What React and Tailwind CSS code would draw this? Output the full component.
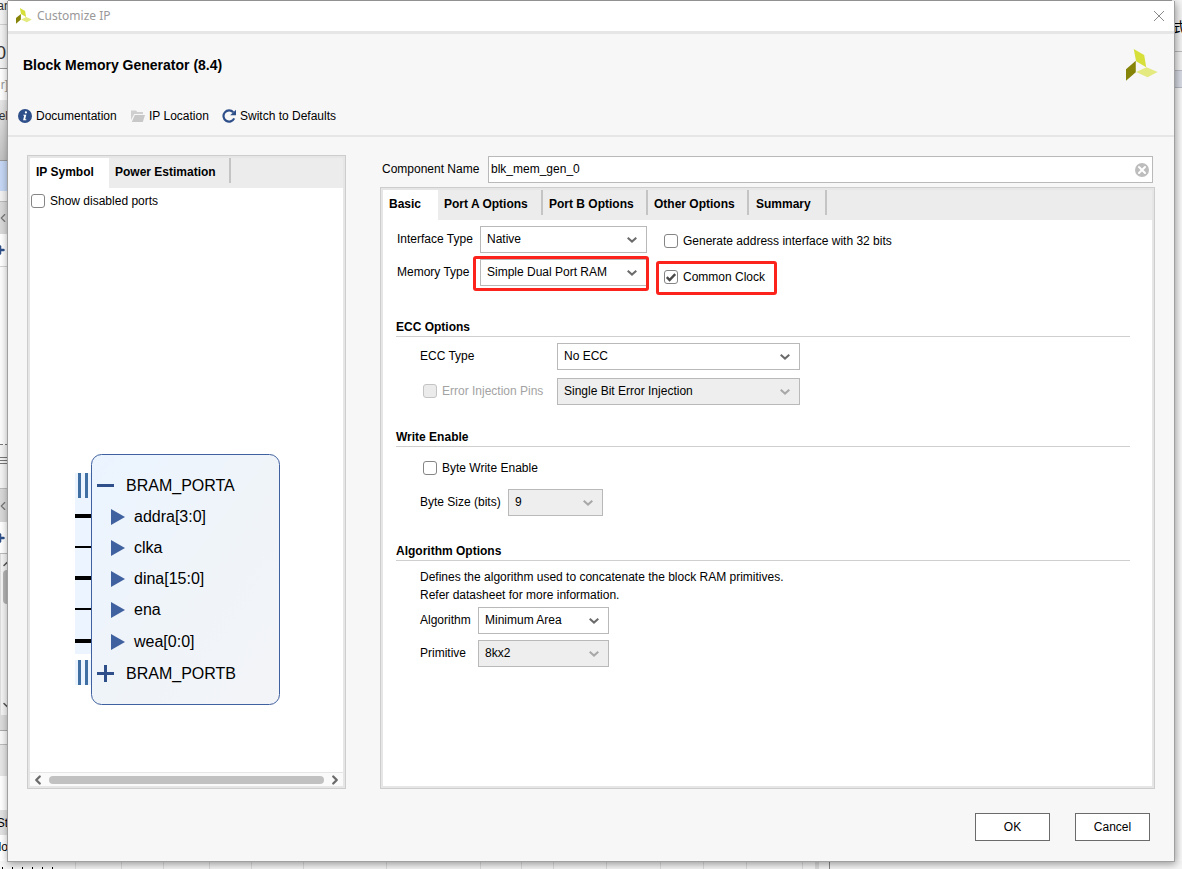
import { ChevronDown, ChevronLeft, ChevronRight, ChevronUp, Plus, X } from "lucide-react";

const Logo = ({ className }) => (
  <svg viewBox="0 0 95 95" className={className} aria-hidden="true">
    <path d="M23 0 54 18 60 54 30 36Z" fill="#d7e03b" />
    <path d="M0 60 29 35V69L0 94Z" fill="#868409" />
    <path d="M30 68 61 54 94 68 64 84Z" fill="#e4ea80" />
  </svg>
);

const InfoIcon = () => (
  <svg viewBox="0 0 14 14" className="size-3.5" aria-hidden="true">
    <circle cx="7" cy="7" r="7" fill="#2f4f8a" />
    <circle cx="7.9" cy="3.4" r="1.1" fill="#fff" />
    <path d="M5.2 5.7H8.3L7.2 10.3H8.3V11.2H5.1L6.2 6.6H5.2Z" fill="#fff" />
  </svg>
);

const FolderIcon = () => (
  <svg viewBox="0 0 14 14" className="size-3.5" aria-hidden="true">
    <path d="M0 1.5H5L6.2 3H12V5H3.2L0 11Z" fill="#cfcfcf" />
    <path d="M3.8 6H14L11.8 13H0.8Z" fill="#c8c8c8" />
  </svg>
);

const RefreshIcon = () => (
  <svg viewBox="0 0 14 14" className="size-3.5" aria-hidden="true">
    <path
      d="M11.3 3.3A5.6 5.6 0 1 0 12.2 9.4"
      fill="none"
      stroke="#2f4f8a"
      strokeWidth="2.2"
    />
    <path d="M14 0.8V6.2H8.2Z" fill="#2f4f8a" />
  </svg>
);

const Checkbox = ({ id, label, checked = false, disabled = false }) => (
  <div className="flex items-center gap-[5px]">
    <span className="relative flex">
      <input
        id={id}
        type="checkbox"
        defaultChecked={checked}
        disabled={disabled}
        className="peer size-3.5 appearance-none rounded-[3px] border border-[#858585] bg-white disabled:border-[#c4c4c4] disabled:bg-[#ebebeb]"
      />
      <svg
        viewBox="0 0 14 14"
        className="pointer-events-none absolute inset-0 hidden size-3.5 peer-checked:block"
      >
        <path d="M2.8 7.2 5.6 10 11.2 4.2" fill="none" stroke="#4a4a4a" strokeWidth="2.4" />
      </svg>
    </span>
    <label htmlFor={id} className={disabled ? "text-[#a3a3a3]" : ""}>
      {label}
    </label>
  </div>
);

const Select = ({ id, value, className, disabled = false }) => (
  <div className={`relative ${className}`}>
    <select
      id={id}
      disabled={disabled}
      className="block h-[27px] w-full appearance-none border border-[#b9b9b9] bg-white pr-6 pb-0.5 pl-1.5 text-black disabled:bg-[#eeeeee] disabled:opacity-100"
    >
      <option>{value}</option>
    </select>
    <svg
      viewBox="0 0 10 6"
      className={`pointer-events-none absolute top-[11px] right-2.5 h-1.5 w-2.5 ${
        disabled ? "text-[#a8a8a8]" : "text-[#6b6b6b]"
      }`}
    >
      <path d="M0.7 0.8 5 4.6 9.3 0.8" fill="none" stroke="currentColor" strokeWidth="2" />
    </svg>
  </div>
);

const FieldLabel = ({ htmlFor, className, children }) => (
  <label htmlFor={htmlFor} className={`pb-0.5 ${className}`}>
    {children}
  </label>
);

const Tab = ({ label, active = false, className }) => (
  <button
    role="tab"
    aria-selected={active}
    className={`flex font-bold ${active ? "bg-white" : ""} ${className}`}
  >
    <span
      className={`flex w-full items-center ${
        active ? "h-[30px] pb-0.5" : "h-[25px] border-r-2 border-[#c4c4c4] pt-[3px]"
      }`}
    >
      {label}
    </span>
  </button>
);

const Section = ({ title, className, children }) => (
  <section className={`mr-[22px] ml-[13px] ${className}`}>
    <h2 className="h-5 border-b border-[#cfcfcf] leading-5 font-bold">{title}</h2>
    <div className="pl-6">{children}</div>
  </section>
);

const pins = [
  { name: "addra[3:0]", y: 63, bus: true },
  { name: "clka", y: 94, bus: false },
  { name: "dina[15:0]", y: 125, bus: true },
  { name: "ena", y: 156, bus: false },
  { name: "wea[0:0]", y: 188, bus: true },
];

const IpSymbol = () => (
  <svg width="206" height="252" viewBox="0 0 206 252" className="text-base">
    <defs>
      <linearGradient id="block" x1="0" y1="0" x2="1" y2="1">
        <stop offset="0" stopColor="#ebf4ff" />
        <stop offset="0.5" stopColor="#eff4f9" />
        <stop offset="1" stopColor="#f3f4f8" />
      </linearGradient>
    </defs>
    <path d="M0 19H16V200H0ZM0 206H16V231H0Z" fill="#ecf5ff" />
    <path d="M3 19H6V44H3ZM10 19H13V44H10ZM3 206H6V231H3ZM10 206H13V231H10Z" fill="#3f6fa3" />
    <rect x="16.5" y="0.5" width="188" height="250" rx="10" fill="url(#block)" stroke="#40619f" />
    <path d="M22 30H39V33H22ZM22 218H39V221H22ZM29 211H32V228H29Z" fill="#2f4f8a" />
    <text x="51" y="37">BRAM_PORTA</text>
    {pins.map((pin) => (
      <g key={pin.name}>
        <rect x="0" y={pin.bus ? pin.y - 3 : pin.y - 2} width="16" height={pin.bus ? 4 : 2} />
        <path d={`M36 ${pin.y - 8}L50 ${pin.y}L36 ${pin.y + 8}Z`} fill="#40619f" />
        <text x="59" y={pin.y + 5}>
          {pin.name}
        </text>
      </g>
    ))}
    <text x="51" y="225">BRAM_PORTB</text>
  </svg>
);

/* Slivers of the main window that stay visible around the dialog */
const MainWindow = () => (
  <div className="absolute inset-0 overflow-hidden bg-[#fafafa]" aria-hidden="true">
    <div className="absolute inset-x-0 top-0 h-px bg-[#a3a3a3]" />
    <div className="absolute top-0 left-0 flex w-2 flex-col overflow-hidden whitespace-nowrap text-[#333]">
      <div className="flex h-6 justify-end bg-[#f4f4f4] leading-3">ar</div>
      <div className="flex h-11 items-center justify-end border-t border-[#d0d0d0] bg-[#f3f3f3] pt-3 pr-0.5 text-lg">
        0
      </div>
      <div className="flex h-8 items-center justify-end border-t border-[#999] bg-white text-[#999]">
        r]
      </div>
      <div className="flex h-[60px] justify-end bg-linear-to-b from-[#e8e8e8] to-[#c2c2c2] pt-2">
        el
      </div>
      <div className="h-[31px] border-t border-[#999] bg-[#c5d7f5]" />
      <div className="h-2.5 bg-[#f2f2f2]" />
      <div className="flex h-[33px] items-center border-t border-[#bbb] bg-[#d9d9d9]">
        <ChevronLeft className="-ml-1 size-3.5 shrink-0 text-[#777]" />
      </div>
      <div className="flex h-[33px] items-center border-b border-[#d4d4d4] bg-white">
        <Plus className="-ml-1.5 size-3 shrink-0 text-[#2f4f8a]" strokeWidth={5} />
      </div>
      <div className="h-[178px] border-b border-dashed border-[#777] bg-[#fcfcfc]" />
      <div className="flex h-[43px] flex-col justify-center gap-0.5 bg-[#f4f4f4] pb-3">
        <div className="h-px bg-[#777]" />
        <div className="h-px bg-[#777]" />
        <div className="h-px bg-[#777]" />
      </div>
      <div className="flex h-[34px] items-center border-t border-[#bbb] bg-[#d9d9d9]">
        <ChevronLeft className="-ml-1 size-3.5 shrink-0 text-[#777]" />
      </div>
      <div className="flex h-8 items-center border-b border-[#bbb] bg-white">
        <Plus className="-ml-1.5 size-3 shrink-0 text-[#2f4f8a]" strokeWidth={5} />
      </div>
      <div className="flex h-[161px] flex-col justify-between border-l border-[#ddd] bg-[#f5f5f5] py-1">
        <ChevronUp className="size-3 shrink-0 text-[#555]" strokeWidth={3} />
        <div className="mb-auto ml-0.5 h-[34px] rounded-l bg-[#b5b5b5]" />
        <ChevronDown className="size-3 shrink-0 text-[#555]" strokeWidth={3} />
      </div>
      <div className="h-4 border-b border-[#aaa] bg-[#dcdcdc]" />
      <div className="h-[13px] bg-[#f7f7f7]" />
      <div className="h-8 border-t border-[#bbb] bg-[#e6e6e6]" />
      <div className="h-[34px] bg-white" />
      <div className="flex h-[25px] items-center justify-end bg-[#e2e2e2] text-black">St</div>
      <div className="flex h-[27px] items-center justify-end border-b border-[#ddd] bg-white pb-0.5 text-black">
        No
      </div>
    </div>
    <div className="absolute top-0 right-0 w-2.5 bg-[#f4f4f4]">
      <div className="h-[52px] overflow-hidden border-b border-[#bbb] pt-4 font-['Noto_Sans_CJK_SC',sans-serif] text-sm">
        式
      </div>
      <div className="h-[18px]" />
      <div className="h-[18px] border-y border-[#b9bcc5] bg-[#d9dce6]" />
    </div>
    <div className="absolute inset-x-0 bottom-0 flex h-2 bg-[#f6f6f6]">
      <div className="flex w-[76px] items-end gap-[9px] border-r border-[#ddd] pl-0.5">
        <div className="h-0.5 w-px bg-black" />
        <div className="h-0.5 w-px bg-black" />
        <div className="h-0.5 w-px bg-black" />
        <div className="h-0.5 w-px bg-black" />
        <div className="h-0.5 w-px bg-black" />
        <div className="h-0.5 w-px bg-black" />
      </div>
      <div className="w-[46px] border-r border-[#ddd]" />
      <div className="w-[42px] border-r border-[#ddd]" />
      <div className="w-[46px] border-r border-[#ddd]" />
      <div className="w-[42px] border-r border-[#ddd]" />
      <div className="w-[52px] border-r border-[#ddd]" />
      <div className="w-[83px] border-r border-[#ddd]" />
      <div className="w-[94px] border-r border-[#ddd]" />
      <div className="w-[41px] border-r border-[#ddd]" />
      <div className="w-8 border-r border-[#ddd]" />
      <div className="w-[53px] border-r border-[#ddd]" />
      <div className="w-[54px] border-r border-[#ddd]" />
      <div className="w-[43px] border-r border-[#ddd]" />
      <div className="w-[43px] border-r border-[#ddd]" />
      <div className="w-14 border-r border-[#ddd]" />
      <div className="ml-3 w-[15px] border-x-4 border-r border-[#ddd] border-r-[#888]" />
    </div>
  </div>
);

const App = () => {
  return (
    <div className="relative flex min-h-screen flex-col font-['Liberation_Sans',Arial,sans-serif] text-xs text-black">
      <MainWindow />

      <div
        role="dialog"
        aria-labelledby="dialog-title"
        className="relative mx-[7px] mt-px mb-[7px] flex flex-1 flex-col border-x border-b border-[#a0a0a0] bg-[#f7f7f7] shadow-[1px_2px_8px_rgba(0,0,0,0.4)]"
      >
        {/* Title bar */}
        <div className="flex h-[33px] items-center justify-between border-b-[3px] border-[#e6e6e6] bg-white pr-[9px] pl-2">
          <div className="flex items-center gap-[5px]">
            <Logo className="size-4" />
            <span
              id="dialog-title"
              className="font-['Noto_Sans','Open_Sans',sans-serif] text-[#999]"
            >
              Customize IP
            </span>
          </div>
          <button aria-label="Close" className="text-[#8a8a8a]">
            <svg viewBox="0 0 12 12" className="size-3">
              <path d="M1 1 11 11M11 1 1 11" stroke="currentColor" />
            </svg>
          </button>
        </div>

        {/* Header */}
        <header className="border-b-2 border-[#e6e6e6]">
          <div className="flex h-[62px] items-center justify-between pr-4 pl-[15px]">
            <h1 className="text-sm font-bold">Block Memory Generator (8.4)</h1>
            <Logo className="size-8" />
          </div>
          <div className="flex h-[39px] items-center pt-px pl-2.5">
            <button className="flex w-[113px] items-center gap-1">
              <InfoIcon />
              Documentation
            </button>
            <button className="flex w-[91px] items-center gap-1">
              <FolderIcon />
              IP Location
            </button>
            <button className="flex items-center gap-1">
              <RefreshIcon />
              Switch to Defaults
            </button>
          </div>
        </header>

        <main className="flex flex-1 gap-[34px] px-[19px] pt-[18px]">
          {/* Symbol preview */}
          <div className="flex w-[319px] shrink-0 border border-[#cdcdcd] bg-[#e6e6e6] p-0.5">
            <div className="flex flex-1 flex-col bg-white">
              <div role="tablist" className="flex h-[30px] bg-[#ececec]">
                <Tab label="IP Symbol" active className="w-[79px] pl-1.5" />
                <Tab label="Power Estimation" className="w-[122px] pl-1.5" />
              </div>
              <div className="pt-[5px] pl-px">
                <Checkbox id="show-disabled" label="Show disabled ports" />
              </div>
              <div className="flex flex-1 flex-col justify-end pb-[66px] pl-[45px]">
                <IpSymbol />
              </div>
              <div className="flex h-3.5 items-center border-t border-[#e6e6e6] bg-[#fafafa] px-px text-[#6b6b6b]">
                <ChevronLeft className="size-3.5 shrink-0" strokeWidth={4} />
                <div className="mx-1 h-2 flex-1 rounded-full bg-[#c1c1c1]" />
                <ChevronRight className="size-3.5 shrink-0" strokeWidth={4} />
              </div>
            </div>
          </div>

          {/* Configuration */}
          <div className="flex flex-1 flex-col">
            <div className="mt-px flex items-center pr-0.5 pl-0.5">
              <FieldLabel htmlFor="component-name" className="w-[106px]">
                Component Name
              </FieldLabel>
              <div className="flex h-[27px] flex-1 items-center border border-[#b9b9b9] bg-white pr-[3px]">
                <input
                  id="component-name"
                  defaultValue="blk_mem_gen_0"
                  className="h-full flex-1 px-0.5 pb-0.5 outline-none"
                />
                <button
                  aria-label="Clear"
                  className="flex size-3.5 items-center justify-center rounded-full bg-[#bdbdbd] text-white"
                >
                  <X className="size-3" strokeWidth={4} />
                </button>
              </div>
            </div>

            <div className="mt-1 flex flex-1 border border-[#cdcdcd] bg-[#e6e6e6] p-0.5">
              <div className="flex flex-1 flex-col bg-white">
                <div role="tablist" className="flex h-[30px] bg-[#ececec]">
                  <Tab label="Basic" active className="w-[55px] pl-1.5" />
                  <Tab label="Port A Options" className="w-[105px] pl-1.5" />
                  <Tab label="Port B Options" className="w-[105px] pl-1.5" />
                  <Tab label="Other Options" className="w-[101px] pl-1.5" />
                  <Tab label="Summary" className="w-[78px] pl-[7px]" />
                </div>

                <div className="flex pl-3.5">
                  <div className="flex flex-col gap-1.5 pt-1.5">
                    <div className="flex items-center">
                      <FieldLabel htmlFor="interface-type" className="w-[83px]">
                        Interface Type
                      </FieldLabel>
                      <Select id="interface-type" value="Native" className="w-[167px]" />
                    </div>
                    <div className="relative flex items-center">
                      <FieldLabel htmlFor="memory-type" className="w-[83px]">
                        Memory Type
                      </FieldLabel>
                      <Select id="memory-type" value="Simple Dual Port RAM" className="w-[167px]" />
                      <div className="pointer-events-none absolute -top-[3px] -right-0.5 -bottom-[5px] left-[76px] rounded-[3px] border-3 border-[#fb231c]" />
                    </div>
                  </div>
                  <div className="flex flex-col gap-2 pt-[7px] pl-[17px]">
                    <div className="flex h-7 items-center">
                      <Checkbox id="address-32" label="Generate address interface with 32 bits" />
                    </div>
                    <div className="relative flex h-7 items-center self-start">
                      <Checkbox id="common-clock" label="Common Clock" checked />
                      <div className="pointer-events-none absolute -top-0.5 -right-3 -bottom-1 -left-2 rounded-[3px] border-3 border-[#fb231c]" />
                    </div>
                  </div>
                </div>

                <Section title="ECC Options" className="mt-[26px]">
                  <div className="flex items-center pt-1.5">
                    <FieldLabel htmlFor="ecc-type" className="w-[137px]">
                      ECC Type
                    </FieldLabel>
                    <Select id="ecc-type" value="No ECC" className="w-[243px]" />
                  </div>
                  <div className="flex items-center pt-2">
                    <div className="w-[137px] pb-0.5 pl-[3px]">
                      <Checkbox id="error-pins" label="Error Injection Pins" disabled />
                    </div>
                    <Select
                      id="error-type"
                      value="Single Bit Error Injection"
                      className="w-[243px]"
                      disabled
                    />
                  </div>
                </Section>

                <Section title="Write Enable" className="mt-[22px]">
                  <div className="pt-[13px] pl-[3px]">
                    <Checkbox id="byte-write" label="Byte Write Enable" />
                  </div>
                  <div className="flex items-center pt-[13px]">
                    <FieldLabel htmlFor="byte-size" className="w-[88px]">
                      Byte Size (bits)
                    </FieldLabel>
                    <Select id="byte-size" value="9" className="w-[95px]" disabled />
                  </div>
                </Section>

                <Section title="Algorithm Options" className="mt-[25px]">
                  <p className="pt-[7px] leading-[18px]">
                    Defines the algorithm used to concatenate the block RAM primitives.
                    <br />
                    Refer datasheet for more information.
                  </p>
                  <div className="flex items-center pt-[3px]">
                    <FieldLabel htmlFor="algorithm" className="w-[58px]">
                      Algorithm
                    </FieldLabel>
                    <Select id="algorithm" value="Minimum Area" className="w-[131px]" />
                  </div>
                  <div className="flex items-center pt-1.5">
                    <FieldLabel htmlFor="primitive" className="w-[58px]">
                      Primitive
                    </FieldLabel>
                    <Select id="primitive" value="8kx2" className="w-[131px]" disabled />
                  </div>
                </Section>
              </div>
            </div>
          </div>
        </main>

        {/* Footer */}
        <footer className="flex justify-end gap-[25px] pt-6 pr-6 pb-5">
          <button className="h-7 w-[75px] border border-[#6b6b6b] bg-white">OK</button>
          <button className="h-7 w-[75px] border border-[#6b6b6b] bg-white">Cancel</button>
        </footer>
      </div>
    </div>
  );
};

export default App;
